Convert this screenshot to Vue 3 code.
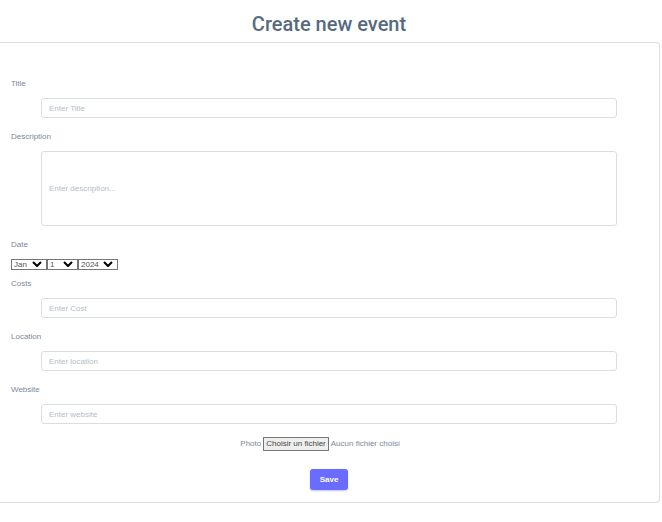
<script setup>
import { ref } from 'vue'

const months = ['Jan', 'Feb', 'Mar', 'Apr', 'May', 'Jun', 'Jul', 'Aug', 'Sep', 'Oct', 'Nov', 'Dec']
const years = [2024, 2025, 2026, 2027]

const form = ref({
  title: '',
  description: '',
  month: 'Jan',
  day: 1,
  year: 2024,
  cost: '',
  location: '',
  website: '',
})
const fileName = ref('')

function pickFile(event) {
  fileName.value = event.target.files[0]?.name ?? ''
}
</script>

<template>
  <main class="page">
    <h1 class="heading">Create new event</h1>
    <form class="card" @submit.prevent>
      <div class="field">
        <label for="title">Title</label>
        <input id="title" v-model="form.title" class="control" type="text" placeholder="Enter Title" />
      </div>
      <div class="field">
        <label for="description">Description</label>
        <input id="description" v-model="form.description" class="control tall" type="text" placeholder="Enter description..." />
      </div>
      <div class="field date-field">
        <label for="month">Date</label>
        <div class="date">
          <span class="pick month">
            <select id="month" v-model="form.month">
              <option v-for="m in months" :key="m">{{ m }}</option>
            </select>
            <svg viewBox="0 0 10 6" aria-hidden="true"><path d="M1 1l4 4 4-4" /></svg>
          </span>
          <span class="pick day">
            <select v-model="form.day" aria-label="Day">
              <option v-for="d in 31" :key="d" :value="d">{{ d }}</option>
            </select>
            <svg viewBox="0 0 10 6" aria-hidden="true"><path d="M1 1l4 4 4-4" /></svg>
          </span>
          <span class="pick year">
            <select v-model="form.year" aria-label="Year">
              <option v-for="y in years" :key="y" :value="y">{{ y }}</option>
            </select>
            <svg viewBox="0 0 10 6" aria-hidden="true"><path d="M1 1l4 4 4-4" /></svg>
          </span>
        </div>
      </div>
      <div class="field">
        <label for="cost">Costs</label>
        <input id="cost" v-model="form.cost" class="control" type="text" placeholder="Enter Cost" />
      </div>
      <div class="field">
        <label for="location">Location</label>
        <input id="location" v-model="form.location" class="control" type="text" placeholder="Enter location" />
      </div>
      <div class="field">
        <label for="website">Website</label>
        <input id="website" v-model="form.website" class="control" type="text" placeholder="Enter website" />
      </div>
      <div class="photo">
        <label for="photo">Photo</label>
        <span class="file">
          <span class="file-button">Choisir un fichier</span>
          <span>{{ fileName || 'Aucun fichier choisi' }}</span>
          <input id="photo" type="file" @change="pickFile" />
        </span>
      </div>
      <button class="save" type="submit">Save</button>
    </form>
  </main>
</template>

<style>
body {
  margin: 0;
  background: #fff;
}
</style>

<style scoped>
.page {
  font-family: "Liberation Sans", Arial, sans-serif;
  font-size: 8px;
  line-height: 12px;
  color: #7a899a;
}
.heading {
  margin: 0 4px 0 0;
  padding: 12px 0 6px;
  font-family: Roboto, sans-serif;
  font-size: 20px;
  line-height: 24px;
  font-weight: 500;
  text-align: center;
  color: #566a7f;
}
.card {
  display: flex;
  flex-direction: column;
  margin-right: 2px;
  padding: 35px 10px 12px 11px;
  border: 1px solid #d9dee3;
  border-left: 0;
  border-radius: 0 4px 4px 0;
}
.field {
  display: flex;
  flex-direction: column;
  align-items: flex-start;
  gap: 8px;
  margin-bottom: 13px;
}
.control {
  box-sizing: border-box;
  align-self: stretch;
  height: 20px;
  margin: 0 32px 0 30px;
  padding: 0 7px;
  border: 1px solid #d9dee3;
  border-radius: 3px;
  background: #fff;
  font: inherit;
  color: inherit;
}
.control.tall {
  height: 75px;
}
.control::placeholder {
  color: #b4bdc6;
  opacity: 1;
}
.date-field {
  margin-bottom: 8px;
}
.date {
  display: flex;
}
.pick {
  position: relative;
  display: flex;
}
.pick select {
  box-sizing: border-box;
  width: 100%;
  height: 11px;
  padding: 0 2px;
  border: 1px solid #767676;
  border-radius: 0;
  appearance: none;
  background: #fff;
  font: inherit;
  line-height: 9px;
  color: #555;
}
.pick svg {
  position: absolute;
  top: 2px;
  right: 5px;
  width: 10px;
  height: 6px;
  fill: none;
  stroke: #000;
  stroke-width: 2;
  pointer-events: none;
}
.month {
  width: 36px;
}
.day {
  width: 31px;
}
.year {
  width: 40px;
}
.photo {
  display: flex;
  justify-content: center;
  align-items: center;
  gap: 2px;
  margin: 0 20px 18px 0;
}
.file {
  position: relative;
  display: flex;
  align-items: center;
  gap: 2px;
}
.file input {
  position: absolute;
  inset: 0;
  width: 100%;
  opacity: 0;
}
.file-button {
  padding: 0 2px;
  border: 1px solid #767676;
  background: #efefef;
  color: #444;
}
.save {
  align-self: center;
  height: 21px;
  margin-right: 2px;
  padding: 0 10px;
  border: 0;
  border-radius: 3px;
  background: #696cff;
  box-shadow: 0 1px 2px rgba(105, 108, 255, 0.4);
  font: inherit;
  font-weight: 600;
  color: #fff;
}
</style>
